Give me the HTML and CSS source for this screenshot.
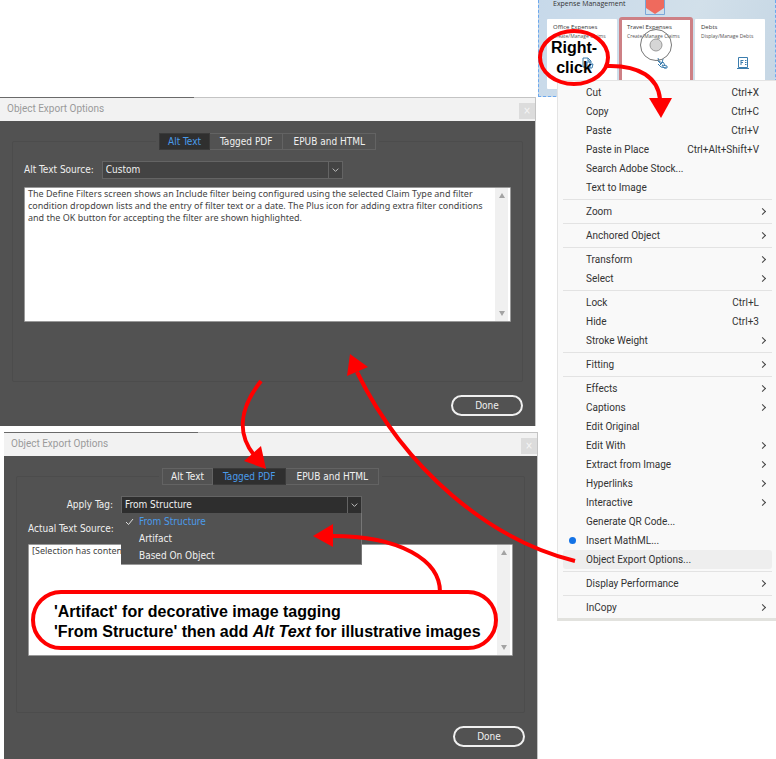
FILE: index.html
```html
<!DOCTYPE html>
<html lang="en">
<head>
<meta charset="utf-8">
<title>Object Export Options</title>
<link rel="stylesheet" href="styles.css">
</head>
<body>
<main class="guide">
  <div class="dialogs">
    <section class="dialog dialog-alt">
      <header class="titlebar"><h2>Object Export Options</h2><button class="close" type="button" aria-label="Close">×</button></header>
      <div class="dialog-body">
        <div class="group">
          <div class="tabs">
            <button class="tab active" type="button">Alt Text</button><button class="tab" type="button">Tagged PDF</button><button class="tab" type="button">EPUB and HTML</button>
          </div>
          <div class="field">
            <label for="alt-source">Alt Text Source:</label>
            <span class="select-box"><select id="alt-source"><option>Custom</option></select><svg class="chevron" viewBox="0 0 14 16"><path d="M4 6.500 7 9.500 10 6.500"/></svg></span>
          </div>
          <div class="text-box">
            <textarea aria-label="Alt text">The Define Filters screen shows an Include filter being configured using the selected Claim Type and filter condition dropdown lists and the entry of filter text or a date. The Plus icon for adding extra filter conditions and the OK button for accepting the filter are shown highlighted.</textarea>
            <span class="scroll"><i class="up"></i><i class="down"></i></span>
          </div>
        </div>
        <button class="done" type="button">Done</button>
      </div>
    </section>

    <section class="dialog dialog-pdf">
      <header class="titlebar"><h2>Object Export Options</h2><button class="close" type="button" aria-label="Close">×</button></header>
      <div class="dialog-body">
        <div class="group">
          <div class="tabs">
            <button class="tab" type="button">Alt Text</button><button class="tab active" type="button">Tagged PDF</button><button class="tab" type="button">EPUB and HTML</button>
          </div>
          <div class="field">
            <label for="apply-tag">Apply Tag:</label>
            <span class="select-box open"><select id="apply-tag"><option>From Structure</option></select><svg class="chevron" viewBox="0 0 14 16"><path d="M4 6.500 7 9.500 10 6.500"/></svg>
              <span class="options" role="listbox" aria-label="Apply Tag">
                <span class="option chosen" role="option" aria-selected="true"><svg class="tick" viewBox="0 0 9 8"><path d="M1 4 3.500 6.500 8 1"/></svg>From Structure</span>
                <span class="option" role="option">Artifact</span>
                <span class="option" role="option">Based On Object</span>
              </span>
            </span>
          </div>
          <div class="field"><label for="actual-text">Actual Text Source:</label></div>
          <div class="text-box">
            <textarea id="actual-text">[Selection has content]</textarea>
            <span class="scroll"><i class="up"></i><i class="down"></i></span>
          </div>
        </div>
        <button class="done" type="button">Done</button>
      </div>
    </section>
  </div>

  <div class="side">
    <section class="panel">
      <h3>Expense Management</h3>
      <div class="cards">
        <article class="card"><h4>Office Expenses</h4><p>Create/Manage Claims</p>
          <svg class="card-icon" viewBox="0 0 12 12"><path d="M1 1h5l3 3v2M1 1v9h3M6 1v3h3M5 5h3v6H5zM8 7h3l-1 4H8"/></svg></article>
        <article class="card picked"><h4>Travel Expenses</h4><p>Create/Manage Claims</p>
          <svg class="card-icon" viewBox="0 0 12 12"><path d="M2 1l1 3 3 2 1-4M1 3l4 4M4 8l3-3 2 3M2 7l3 3 5 1M6 8l5 1v2H8z"/></svg></article>
        <article class="card"><h4>Debts</h4><p>Display/Manage Debts</p>
          <svg class="card-icon end" viewBox="0 0 12 12"><path d="M1.500 .5h9v10h-9zM4 3v5M4 3.500h2.500M4 5.500h2M8 3.500h1.500M8 5.500h1.500M8 7.500h1.500M0 11.500h12"/></svg></article>
      </div>
    </section>

    <ul class="menu">
      <li><button type="button">Cut<kbd>Ctrl+X</kbd></button></li>
      <li><button type="button">Copy<kbd>Ctrl+C</kbd></button></li>
      <li><button type="button">Paste<kbd>Ctrl+V</kbd></button></li>
      <li><button type="button">Paste in Place<kbd>Ctrl+Alt+Shift+V</kbd></button></li>
      <li><button type="button">Search Adobe Stock...</button></li>
      <li><button type="button">Text to Image</button></li>
      <li class="rule"><button type="button" class="sub">Zoom</button></li>
      <li class="rule"><button type="button" class="sub">Anchored Object</button></li>
      <li class="rule"><button type="button" class="sub">Transform</button></li>
      <li><button type="button" class="sub">Select</button></li>
      <li class="rule"><button type="button">Lock<kbd>Ctrl+L</kbd></button></li>
      <li><button type="button">Hide<kbd>Ctrl+3</kbd></button></li>
      <li><button type="button" class="sub">Stroke Weight</button></li>
      <li class="rule"><button type="button" class="sub">Fitting</button></li>
      <li class="rule"><button type="button" class="sub">Effects</button></li>
      <li><button type="button" class="sub">Captions</button></li>
      <li><button type="button">Edit Original</button></li>
      <li><button type="button" class="sub">Edit With</button></li>
      <li><button type="button" class="sub">Extract from Image</button></li>
      <li><button type="button" class="sub">Hyperlinks</button></li>
      <li><button type="button" class="sub">Interactive</button></li>
      <li><button type="button">Generate QR Code...</button></li>
      <li><button type="button" class="dot">Insert MathML...</button></li>
      <li><button type="button" class="hover">Object Export Options...</button></li>
      <li class="rule"><button type="button" class="sub">Display Performance</button></li>
      <li class="rule"><button type="button" class="sub">InCopy</button></li>
    </ul>
  </div>

  <svg class="notes" width="776" height="759" viewBox="0 0 776 759" aria-hidden="true">
    <path class="marker-box" d="M645.500 0V14.500H664.500V0"/>
    <path class="marker" d="M646 0H664V8L655 14 646 8Z"/>
    <circle class="ring" cx="656" cy="45" r="15.500"/>
    <circle class="knob" cx="656" cy="45" r="6"/>
    <path class="arrow" d="M607 66C640 65 658 78 660 99"/>
    <path class="head" d="M649 98H672L661 118Z"/>
    <path class="arrow" d="M261 381C238 410 238 435 254 455"/>
    <path class="head" d="M266 469 244 461 261 446Z"/>
    <path class="arrow" d="M575 561C490 540 405 470 357 372"/>
    <path class="head" d="M350 354 368 367 347 376Z"/>
    <path class="arrow" d="M440 592C440 560 400 536 332 536"/>
    <path class="head" d="M313 536 333 524V547Z"/>
  </svg>
  <p class="bubble">Right-<br>click</p>
  <p class="callout">'Artifact' for decorative image tagging<br>'From Structure' then add <em>Alt Text</em> for illustrative images</p>
</main>
</body>
</html>
```
FILE: styles.css
```css
* { box-sizing: border-box; }
body { margin: 0; background: #fff; }
h2, h3, h4, p, ul { margin: 0; padding: 0; font-weight: normal; }
button, select, textarea { font: inherit; color: inherit; margin: 0; border: 0; padding: 0; background: none; }

.guide { position: relative; display: grid; grid-template-columns: minmax(0, 1fr) 238px; align-items: start; }

/* Dialogs */
.dialogs { display: flex; flex-direction: column; gap: 6px; padding-top: 97px; font: 10px/12px "DejaVu Sans Condensed", "DejaVu Sans", sans-serif; }
.dialog { background: #525252; color: #f0f0f0; border-right: 1px solid #c4c4c4; }
.dialog-alt { margin-right: 2px; }
.dialog-pdf { margin-left: 4px; }
.titlebar { display: flex; align-items: center; justify-content: space-between; height: 24px; padding-left: 7px; background: linear-gradient(90deg, #6a6a6a 194px, #c4c4c4 194px) top / 100% 1px no-repeat #f2f2f2; color: #9a9a9a; }
.titlebar h2 { font: 10px/20px Roboto, sans-serif; }
.close { width: 16px; height: 16px; margin-top: 4px; background: #dcdcdc; color: #f6f6f6; }
.dialog-body { display: flex; flex-direction: column; padding: 20px 12px 10px 12px; }
.dialog-pdf .dialog-body { padding-bottom: 12px; }
.group { display: flex; flex-direction: column; padding: 0 11px 59px; border: 1px solid #4c4c4c; border-radius: 2px; }
.dialog-pdf .group { padding-bottom: 56px; }
.tabs { display: flex; align-self: center; margin: -9px 0 11px; padding: 0 3px; background: #525252; }
.tab { height: 17px; padding: 0 10px; border: 1px solid #636363; border-left-width: 0; }
.tab:first-child { border-left-width: 1px; padding: 0 8px; }
.tab.active { background: #2f2f2f; color: #4a9bea; border-color: #3a3a3a; }
.field { display: flex; align-items: center; gap: 8px; height: 18px; margin-bottom: 8px; }
.dialog-pdf .field { margin-bottom: 6px; }
.dialog-pdf .field label { width: 85px; text-align: right; white-space: nowrap; }
.select-box { position: relative; display: flex; width: 241px; height: 18px; background: #434343; border: 1px solid #646464; }
.select-box.open { background: #2e2e2e; }
.select-box select { flex: 1; padding-left: 3px; appearance: none; }
.chevron { width: 14px; height: 16px; border-left: 1px solid #646464; fill: none; stroke: #c8c8c8; }
.options { position: absolute; z-index: 1; top: 16px; left: -1px; width: 241px; background: #525252; border-bottom: 1px solid #999; border-right: 1px solid #777; }
.option { display: flex; align-items: center; height: 17px; padding-left: 18px; }
.option.chosen { padding-left: 4px; gap: 5px; color: #4a9bea; }
.tick { width: 9px; height: 8px; fill: none; stroke: #ddd; }
.text-box { display: flex; height: 135px; background: #fff; border: 1px solid #999; border-radius: 1px; color: #444; }
.dialog-pdf .text-box { height: 112px; }
.text-box textarea { flex: 1; padding: 0 3px; resize: none; outline: 0; overflow: hidden; font: 9px/12px "Noto Sans", sans-serif; }
.scroll { display: flex; flex-direction: column; justify-content: space-between; align-items: center; width: 13px; margin-right: 2px; padding: 5px 0; background: #f0f0f0; }
.up, .down { border: 3px solid transparent; }
.up { border-top: 0; border-bottom: 5px solid #a3a3a3; }
.down { border-bottom: 0; border-top: 5px solid #a3a3a3; }
.done { align-self: flex-end; width: 72px; height: 21px; margin-top: 13px; border: 2px solid #f0f0f0; border-radius: 11px; }

/* Launchpad panel */
.panel { height: 97px; padding: 0 10px 0 8px; background: linear-gradient(110deg, #c7d9ea, #d2e0ea 60%, #c5d6e4); border: 1px dashed #6ca8ee; border-top: 0; color: #333; font-family: "Open Sans", sans-serif; }
.panel h3 { padding-left: 6px; font-size: 7px; line-height: 8px; margin-bottom: 11px; }
.cards { display: grid; grid-template-columns: 1fr 1fr 1fr; gap: 4px; }
.card { display: flex; flex-direction: column; height: 70px; padding: 4px 0 0 6px; background: #fff; white-space: nowrap; border-radius: 1px; }
.card h4 { font-size: 6px; line-height: 9px; }
.card p { font-size: 5px; line-height: 9px; color: #555; }
.card.picked { outline: 3px solid #cd8085; outline-offset: -1px; }
.card-icon { width: 12px; height: 12px; margin: 16px 0 0 29px; fill: none; stroke: #3b7dae; }
.card-icon.end { margin-left: 36px; }

/* Context menu */
.menu { position: relative; margin: -17px 0 0 19px; padding: 2px 4px 1px 5px; list-style: none; background: #f9f9f9; border: 1px solid #e4e4e4; border-right: 0; border-bottom: 3px solid #e2e2de; color: #333; font: 10px/19px Roboto, sans-serif; }
.menu button { position: relative; display: flex; justify-content: space-between; width: 100%; height: 19px; padding: 0 13px 0 23px; text-align: left; border-radius: 3px; }
.menu kbd { font: inherit; }
.rule::before { content: ""; display: block; height: 1px; margin: 2px 0; background: #e3e3e3; }
.menu .sub { padding-right: 7px; }
.sub::after { content: ""; width: 4px; height: 4px; margin-top: 7px; border: solid #444; border-width: 1px 1px 0 0; transform: rotate(45deg); }
.dot::before { content: ""; position: absolute; left: 6px; top: 6px; width: 7px; height: 7px; border-radius: 50%; background: #1473e6; }
.menu .hover { background: #eee; }

/* Annotations */
.notes { position: absolute; top: 0; left: 0; z-index: 2; pointer-events: none; }
.arrow { fill: none; stroke: #f00; stroke-width: 4; }
.head { fill: #f00; }
.marker { fill: #ef6a5d; }
.marker-box { fill: none; stroke: #7aa7d8; }
.ring { fill: none; stroke: #777; }
.knob { fill: #d5d5d5; stroke: #999; }
.bubble, .callout { position: absolute; z-index: 3; border: 4px solid #f00; color: #000; font: bold 16px/20px "Liberation Sans", sans-serif; }
.bubble { left: 538px; top: 29px; width: 72px; height: 57px; padding-top: 5px; border-radius: 50%; text-align: center; }
.callout { left: 31px; top: 590px; padding: 8px 13px 4px 19px; background: #fff; border-radius: 30px; white-space: nowrap; }
```
